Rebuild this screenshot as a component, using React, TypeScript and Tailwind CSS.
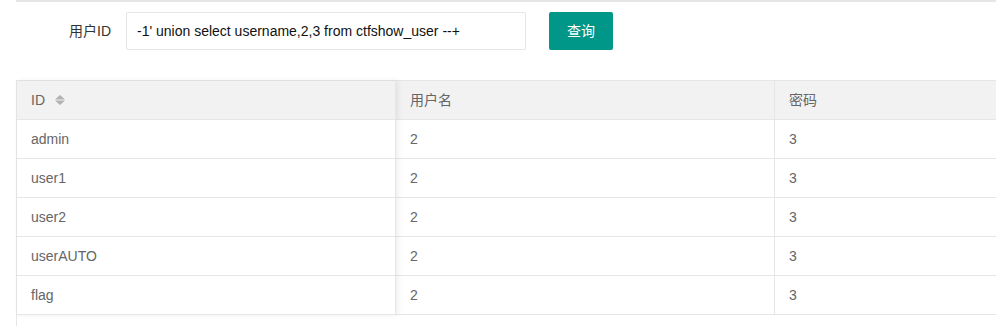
const rows = [
  { id: "admin", name: "2", pass: "3" },
  { id: "user1", name: "2", pass: "3" },
  { id: "user2", name: "2", pass: "3" },
  { id: "userAUTO", name: "2", pass: "3" },
  { id: "flag", name: "2", pass: "3" },
];

function SortIcon() {
  return (
    <svg width="10" height="10" viewBox="0 0 10 10" className="ml-[10px]">
      <polygon points="0,4.5 5,0 10,4.5" fill="#b2b2b2" />
      <polygon points="0,5.5 10,5.5 5,10" fill="#b2b2b2" />
    </svg>
  );
}

function Column({
  title,
  cells,
  sort,
  fixed,
}: {
  title: string;
  cells: string[];
  sort?: boolean;
  fixed?: boolean;
}) {
  return (
    <div
      className={
        fixed
          ? "relative z-10 flex w-[379px] flex-col shadow-[2px_0_6px_rgba(0,0,0,0.07)]"
          : "flex w-[379px] flex-col"
      }
    >
      <div className="flex h-[39px] items-center border-r border-b border-[#e6e6e6] bg-[#f2f2f2] px-[14px]">
        <span>{title}</span>
        {sort && <SortIcon />}
      </div>
      {cells.map((c, i) => (
        <div
          key={i}
          className="flex h-[39px] items-center border-r border-b border-[#e6e6e6] bg-white px-[14px]"
        >
          {c}
        </div>
      ))}
    </div>
  );
}

export default function App() {
  return (
    <div className="h-[326px] w-[996px] overflow-hidden bg-white font-['Liberation_Sans','Noto_Sans_CJK_SC',sans-serif] text-[14px]">
      <div className="ml-4 h-[2px] bg-[#e6e6e6]" />

      <div className="mt-[10px] flex items-center pl-4">
        <label className="w-[110px] pr-[15px] text-right text-[#333]">用户ID</label>
        <div className="flex h-[38px] w-[400px] items-center rounded-[2px] border border-[#e6e6e6] px-[10px] text-[#111]">
          -1' union select username,2,3 from ctfshow_user --+
        </div>
        <button className="ml-[23px] h-[38px] rounded-[2px] bg-[#009688] px-[18px] text-white">
          查询
        </button>
      </div>

      <div className="mt-[30px] ml-4 h-[246px] w-[1138px] border-t border-l border-[#e6e6e6] text-[#666]">
        <div className="flex">
          <Column title="ID" sort fixed cells={rows.map((r) => r.id)} />
          <Column title="用户名" cells={rows.map((r) => r.name)} />
          <Column title="密码" cells={rows.map((r) => r.pass)} />
        </div>
      </div>
    </div>
  );
}
